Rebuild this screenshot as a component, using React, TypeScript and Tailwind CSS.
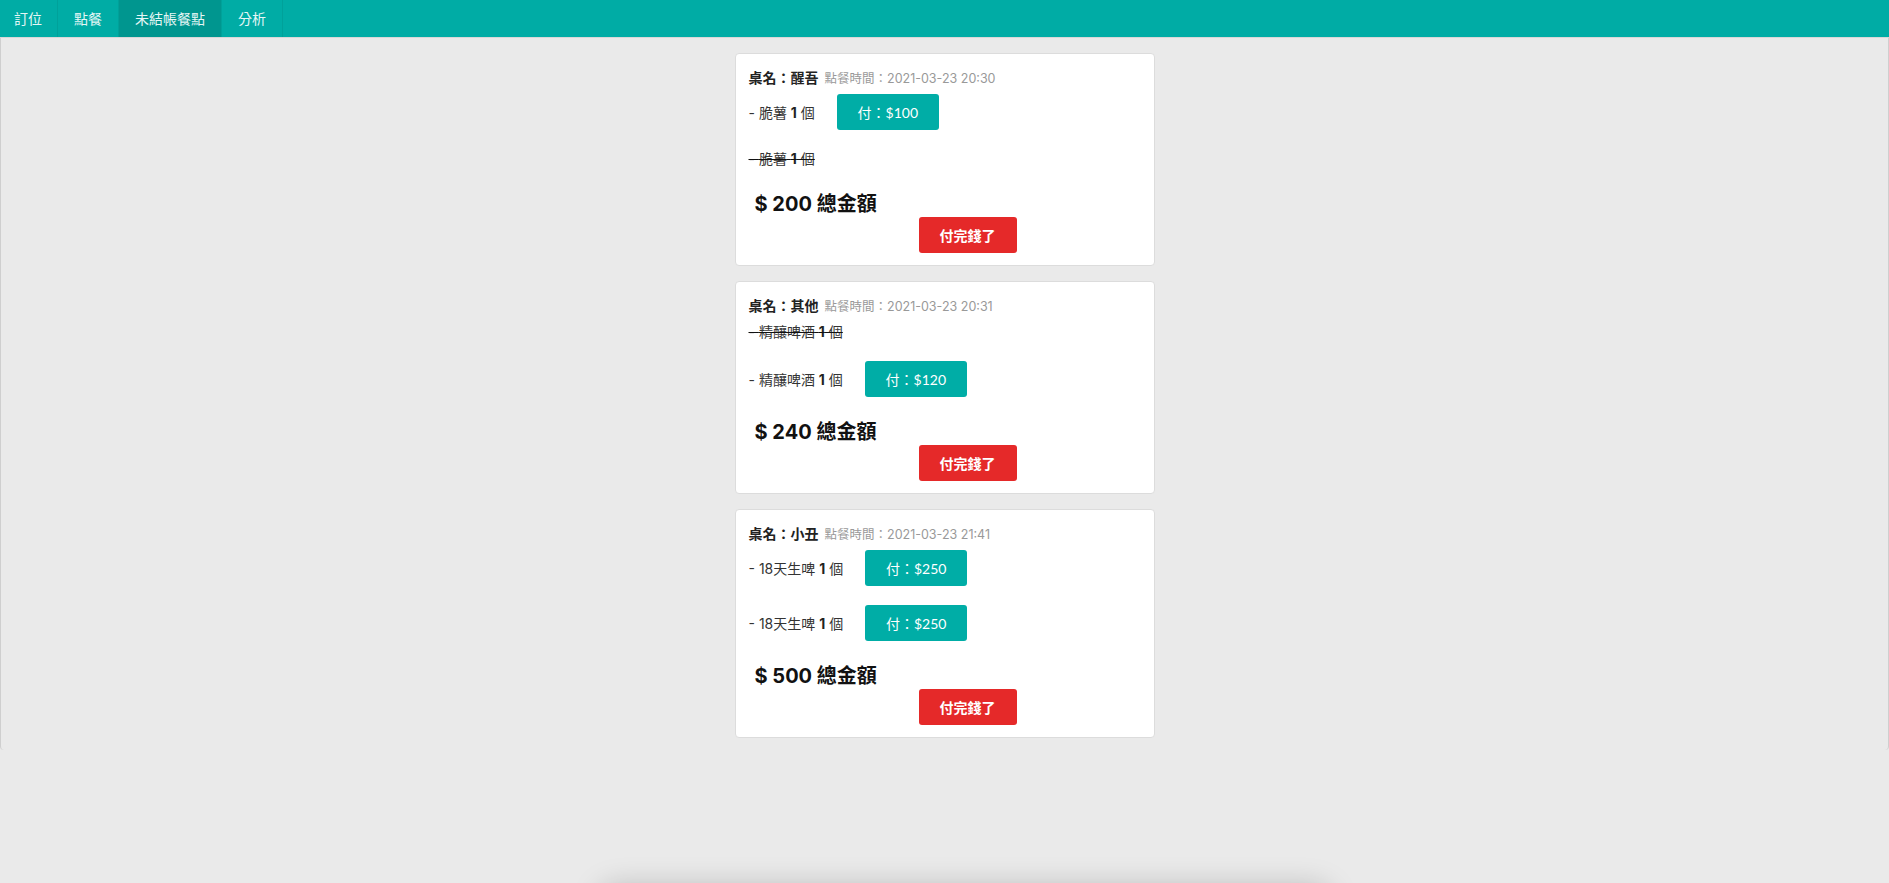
import React from 'react';

type Item = { name: string; qty: number; price: number; paid: boolean };
type Order = { table: string; time: string; total: number; items: Item[] };

const orders: Order[] = [
  {
    table: '醒吾',
    time: '2021-03-23 20:30',
    total: 200,
    items: [
      { name: '脆薯', qty: 1, price: 100, paid: false },
      { name: '脆薯', qty: 1, price: 100, paid: true },
    ],
  },
  {
    table: '其他',
    time: '2021-03-23 20:31',
    total: 240,
    items: [
      { name: '精釀啤酒', qty: 1, price: 120, paid: true },
      { name: '精釀啤酒', qty: 1, price: 120, paid: false },
    ],
  },
  {
    table: '小丑',
    time: '2021-03-23 21:41',
    total: 500,
    items: [
      { name: '18天生啤', qty: 1, price: 250, paid: false },
      { name: '18天生啤', qty: 1, price: 250, paid: false },
    ],
  },
];

const tabs = ['訂位', '點餐', '未結帳餐點', '分析'];

const OrderCard = ({ order }: { order: Order }) => (
  <div className="w-[420px] bg-white border border-[#dcdcdc] rounded-[4px] px-[13px] pt-[14px] pb-[12px]">
    <div className="flex items-baseline h-[20px] leading-[20px]">
      <span className="text-[14px] font-bold text-[#222]">桌名：{order.table}</span>
      <span className="ml-[6px] text-[12.5px] text-[#999]">點餐時間：{order.time}</span>
    </div>

    <div className="mt-[6px]">
      {order.items.map((item, i) =>
        item.paid ? (
          <div key={i} className="h-[20px] leading-[20px] mb-[19px] text-[14px] text-[#333]">
            <span className="line-through decoration-[#111]">
              - {item.name} <b className="text-[#222]">{item.qty}</b> 個
            </span>
          </div>
        ) : (
          <div key={i} className="flex items-center h-[36px] mb-[19px] text-[14px] text-[#333]">
            <span>
              - {item.name} <b className="text-[#222]">{item.qty}</b> 個
            </span>
            <button
              className="ml-[22px] w-[102px] h-[36px] rounded-[3px] bg-[#00ada6] text-white text-[14px]"
              style={{ fontFamily: 'Lato, "Noto Sans CJK TC", sans-serif' }}
            >
              付：${item.price}
            </button>
          </div>
        )
      )}
    </div>

    <div className="pt-[3px] h-[29px] leading-[26px] pl-[6px] text-[20px] font-bold text-[#111]">
      $ {order.total} 總金額
    </div>
    <button
      className="ml-[170px] w-[98px] h-[36px] rounded-[3px] bg-[#e52929] text-white text-[14px] font-bold"
      style={{ fontFamily: 'Lato, "Noto Sans CJK TC", sans-serif' }}
    >
      付完錢了
    </button>
  </div>
);

export default function App() {
  return (
    <div
      className="relative h-screen overflow-hidden bg-[#eaeaea]"
      style={{ fontFamily: 'Inter, "Noto Sans CJK TC", sans-serif' }}
    >
      {/* Top nav */}
      <nav className="flex h-[38px] bg-[#00aca5] border-b border-[#d8d8d8]">
        {tabs.map((t, i) => (
          <div
            key={t}
            className={`flex items-center px-4 text-[14px] text-[#e6f7f6] border-r border-[#00a19a] ${
              i === 0 ? 'pl-[14px] pr-[15px]' : ''
            } ${i === 2 ? 'bg-[#00968f]' : ''}`}
          >
            {t}
          </div>
        ))}
      </nav>

      {/* Panel */}
      <div className="rounded-b-[4px] border-x border-[#cfcfcf] pt-[15px] pb-[12px] flex flex-col items-center gap-[15px]">
        {orders.map((o) => (
          <OrderCard key={o.table} order={o} />
        ))}
      </div>

      {/* shadow of something below the fold */}
      <div className="absolute left-[600px] top-[893px] w-[730px] h-[120px] rounded-2xl bg-[#eaeaea] shadow-[0_-6px_30px_rgba(0,0,0,0.22)]" />
    </div>
  );
}
